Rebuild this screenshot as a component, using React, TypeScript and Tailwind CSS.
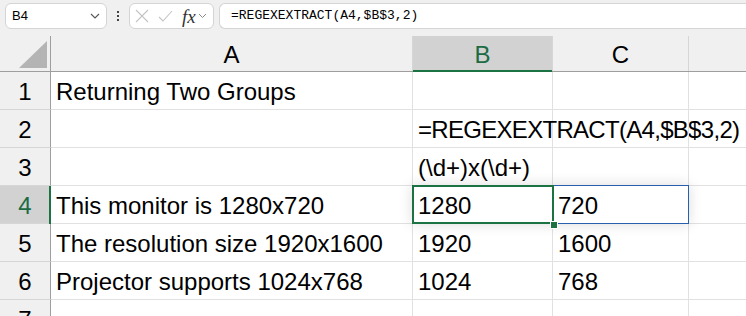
import React from "react";

const cellFont = { fontFamily: '"Liberation Sans", Arial, sans-serif' };

type Row = { n: number; a?: string; b?: string; c?: string };
const rows: Row[] = [
  { n: 1, a: "Returning Two Groups" },
  { n: 2, b: "=REGEXEXTRACT(A4,$B$3,2)" },
  { n: 3, b: "(\\d+)x(\\d+)" },
  { n: 4, a: "This monitor is 1280x720", b: "1280", c: "720" },
  { n: 5, a: "The resolution size 1920x1600", b: "1920", c: "1600" },
  { n: 6, a: "Projector supports 1024x768", b: "1024", c: "768" },
  { n: 7 },
];

function Cell({ w, text, last, tight }: { w: string; text?: string; last?: boolean; tight?: boolean }) {
  return (
    <div
      className={`${w} h-full shrink-0 border-b border-[#e1e1e1] ${last ? "" : "border-r"} flex items-center pl-[5px] pt-[3px] whitespace-nowrap overflow-visible text-[24px] text-black relative z-10 ${tight ? "tracking-[-0.7px]" : ""}`}
    >
      {text}
    </div>
  );
}

export default function App() {
  return (
    <div className="w-[746px] h-[316px] overflow-hidden bg-[#f0f0f0] relative" style={cellFont}>
      {/* toolbar */}
      <div className="h-[36px] flex items-start pt-[3px] pl-[5px]">
        <div className="w-[102px] h-[26px] rounded-[6px] border border-[#d4d4d4] bg-white flex items-center justify-between pl-[6px] pr-[6px]">
          <span className="text-[13px] text-black">B4</span>
          <svg width="10" height="6" viewBox="0 0 10 6"><path d="M1 1 L5 5 L9 1" fill="none" stroke="#555" strokeWidth="1.1" /></svg>
        </div>
        <div className="w-[22px] h-[26px] flex flex-col items-center justify-center gap-[2px]">
          <div className="w-[2px] h-[2px] bg-[#444]" />
          <div className="w-[2px] h-[2px] bg-[#444]" />
          <div className="w-[2px] h-[2px] bg-[#444]" />
        </div>
        <div className="w-[85px] h-[26px] rounded-[6px] border border-[#d4d4d4] bg-white flex items-center pl-[5px] gap-[9px]">
          <svg width="14" height="14" viewBox="0 0 14 14"><path d="M1 1 L13 13 M13 1 L1 13" stroke="#c4c4c4" strokeWidth="1.1" /></svg>
          <svg width="15" height="14" viewBox="0 0 15 14"><path d="M1 8 L5 12 L14 2" fill="none" stroke="#c4c4c4" strokeWidth="1.1" /></svg>
          <div className="flex items-center gap-[2px]">
            <span className="italic text-[19px] text-[#333] leading-none" style={{ fontFamily: '"Liberation Serif", "Times New Roman", serif' }}>fx</span>
            <svg width="9" height="6" viewBox="0 0 9 6"><path d="M1 1 L4.5 4.5 L8 1" fill="none" stroke="#888" strokeWidth="1" /></svg>
          </div>
        </div>
        <div className="ml-[5px] flex-1 h-[26px] rounded-l-[6px] border border-r-0 border-[#d4d4d4] bg-white flex items-center pl-[11px]">
          <span className="text-[13px] text-black" style={{ fontFamily: '"Liberation Mono", "Courier New", monospace' }}>=REGEXEXTRACT(A4,$B$3,2)</span>
        </div>
      </div>

      {/* grid */}
      <div className="relative">
        {/* column header */}
        <div className="flex h-[36px] border-b border-[#9e9e9e] bg-[#f0f0f0]">
          <div className="w-[51px] shrink-0 h-full border-r border-[#9e9e9e] flex items-end justify-end pr-[3px] pb-[3px]">
            <svg width="28" height="27" viewBox="0 0 28 27"><path d="M28 0 L28 27 L0 27 Z" fill="#b4b4b4" /></svg>
          </div>
          <div className="w-[362px] shrink-0 h-full border-r border-[#d6d6d6] flex items-center justify-center text-[24px] pt-[3px] text-black">A</div>
          <div className="w-[140px] shrink-0 h-full border-r border-[#d6d6d6] bg-[#d2d2d2] flex items-center justify-center text-[24px] pt-[3px] text-[#1b6c42] relative">
            B
            <div className="absolute left-0 right-0 bottom-[-1px] h-[2px] bg-[#1b7343]" />
          </div>
          <div className="w-[136px] shrink-0 h-full border-r border-[#d6d6d6] flex items-center justify-center text-[24px] pt-[3px] text-black">C</div>
          <div className="flex-1 h-full" />
        </div>

        {rows.map((r) => {
          const sel = r.n === 4;
          return (
            <div key={r.n} className="flex h-[38px] bg-white">
              <div
                className={`w-[51px] shrink-0 h-full border-b border-[#d6d6d6] flex items-center justify-center pt-[3px] text-[24px] relative border-r border-r-[#9e9e9e] ${sel ? "bg-[#d2d2d2] text-[#1b6c42]" : "bg-[#f0f0f0] text-black"}`}
              >
                {r.n}
                {sel && <div className="absolute top-0 bottom-[-1px] right-[-1px] w-[2px] bg-[#1b7343]" />}
              </div>
              <Cell w="w-[362px]" text={r.a} />
              <Cell w="w-[140px]" text={r.b} tight={r.n === 2} />
              <Cell w="w-[136px]" text={r.c} />
              <Cell w="flex-1" last />
            </div>
          );
        })}

        {/* selection overlay */}
        <div className="absolute left-[412px] top-[149px] w-[277px] h-[39px] shadow-[0_0_14px_rgba(0,0,0,0.14)] pointer-events-none z-20" />
        <div className="absolute left-[553px] top-[149px] w-[136px] h-[39px] border border-[#2a5fae] pointer-events-none z-20" />
        <div className="absolute left-[412px] top-[149px] w-[142px] h-[39px] border-2 border-[#1b7343] pointer-events-none z-20" />
        <div className="absolute left-[550px] top-[185px] w-[6px] h-[6px] bg-[#1b7343] border border-white box-content pointer-events-none z-20" />
      </div>
    </div>
  );
}
